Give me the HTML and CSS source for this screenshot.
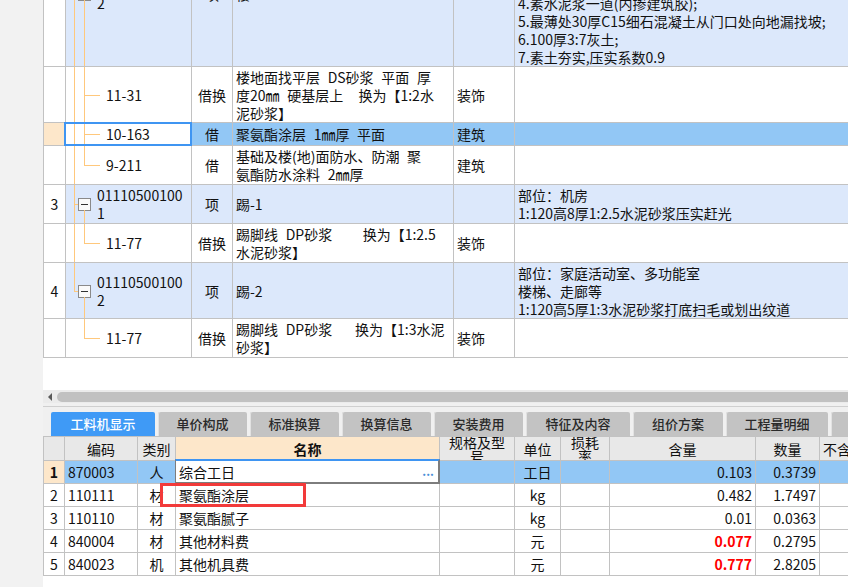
FILE: index.html
```html
<!DOCTYPE html>
<html lang="zh-CN">
<head>
<meta charset="utf-8">
<title>工料机显示</title>
<link rel="stylesheet" href="styles.css">
</head>
<body>
<div class="app">
  <aside class="side"></aside>
  <main class="main">
    <section class="tarea">
      <div class="ttable">
        <div class="trow ra parent">
          <div class="c num ctr"><span>2</span></div>
          <div class="c tree"><span class="vo"></span><span class="so"></span><span class="box"></span><span class="vi frombox"></span><span class="ptxt">01110100100<br>2</span></div>
          <div class="c ctr"><span>项</span></div>
          <div class="c"><span>楼-2</span></div>
          <div class="c"></div>
          <div class="c"><span>部位：卫生间<br>1.防水层;<br>2.找平层;<br>3.结构层;<br>4.素水泥浆一道(内掺建筑胶);<br>5.最薄处30厚C15细石混凝土从门口处向地漏找坡;<br>6.100厚3:7灰土;<br>7.素土夯实,压实系数0.9</span></div>
        </div>
        <div class="trow rb">
          <div class="c num"></div>
          <div class="c tree"><span class="vo"></span><span class="vi"></span><span class="st"></span><span class="ctxt">11-31</span></div>
          <div class="c ctr"><span>借换</span></div>
          <div class="c"><span>楼地面找平层 DS砂浆 平面 厚<br>度20㎜ 硬基层上  换为【1:2水<br>泥砂浆】</span></div>
          <div class="c"><span>装饰</span></div>
          <div class="c"></div>
        </div>
        <div class="trow rc">
          <div class="c num peach"></div>
          <div class="c tree focus"><span class="vo"></span><span class="vi"></span><span class="st"></span><span class="ctxt">10-163</span></div>
          <div class="c ctr sel"><span>借</span></div>
          <div class="c sel"><span>聚氨酯涂层 1㎜厚 平面</span></div>
          <div class="c sel"><span>建筑</span></div>
          <div class="c sel"></div>
        </div>
        <div class="trow rd">
          <div class="c num"></div>
          <div class="c tree"><span class="vo"></span><span class="vi half"></span><span class="st"></span><span class="ctxt">9-211</span></div>
          <div class="c ctr"><span>借</span></div>
          <div class="c"><span>基础及楼(地)面防水、防潮 聚<br>氨酯防水涂料 2㎜厚</span></div>
          <div class="c"><span>建筑</span></div>
          <div class="c"></div>
        </div>
        <div class="trow re parent">
          <div class="c num ctr"><span>3</span></div>
          <div class="c tree"><span class="vo"></span><span class="so"></span><span class="box"></span><span class="vi frombox"></span><span class="ptxt">01110500100<br>1</span></div>
          <div class="c ctr"><span>项</span></div>
          <div class="c"><span>踢-1</span></div>
          <div class="c"></div>
          <div class="c"><span>部位：机房<br>1:120高8厚1:2.5水泥砂浆压实赶光</span></div>
        </div>
        <div class="trow rf">
          <div class="c num"></div>
          <div class="c tree"><span class="vo"></span><span class="vi half"></span><span class="st"></span><span class="ctxt">11-77</span></div>
          <div class="c ctr"><span>借换</span></div>
          <div class="c"><span>踢脚线 DP砂浆    换为【1:2.5<br>水泥砂浆】</span></div>
          <div class="c"><span>装饰</span></div>
          <div class="c"></div>
        </div>
        <div class="trow rg parent">
          <div class="c num ctr"><span>4</span></div>
          <div class="c tree"><span class="vo half"></span><span class="so"></span><span class="box"></span><span class="vi frombox"></span><span class="ptxt">01110500100<br>2</span></div>
          <div class="c ctr"><span>项</span></div>
          <div class="c"><span>踢-2</span></div>
          <div class="c"></div>
          <div class="c"><span>部位：家庭活动室、多功能室<br>楼梯、走廊等<br>1:120高5厚1:3水泥砂浆打底扫毛或划出纹道</span></div>
        </div>
        <div class="trow rh">
          <div class="c num"></div>
          <div class="c tree"><span class="vi half"></span><span class="st"></span><span class="ctxt">11-77</span></div>
          <div class="c ctr"><span>借换</span></div>
          <div class="c"><span>踢脚线 DP砂浆   换为【1:3水泥<br>砂浆】</span></div>
          <div class="c"><span>装饰</span></div>
          <div class="c"></div>
        </div>
      </div>
    </section>

    <div class="hscroll"><span class="arrow"></span><span class="thumb"></span></div>
    <div class="split"></div>

    <nav class="tabs">
      <div class="tab on w5">工料机显示</div>
      <div class="tab w4">单价构成</div>
      <div class="tab w4">标准换算</div>
      <div class="tab w4">换算信息</div>
      <div class="tab w4">安装费用</div>
      <div class="tab w5">特征及内容</div>
      <div class="tab w4b">组价方案</div>
      <div class="tab w5b">工程量明细</div>
      <div class="tab w4"></div>
    </nav>

    <section class="barea">
      <div class="btable">
        <div class="brow hd">
          <div class="b"></div>
          <div class="b ctr">编码</div>
          <div class="b ctr">类别</div>
          <div class="b ctr peach bold">名称</div>
          <div class="b ctr two"><span>规格及型号</span></div>
          <div class="b ctr">单位</div>
          <div class="b ctr two"><span>损耗率</span></div>
          <div class="b ctr">含量</div>
          <div class="b ctr">数量</div>
          <div class="b">不含税市场价</div>
        </div>
        <div class="brow">
          <div class="b ctr peach bold rnum">1</div>
          <div class="b sel">870003</div>
          <div class="b ctr sel">人</div>
          <div class="b edit">综合工日<span class="dots">...</span></div>
          <div class="b sel"></div>
          <div class="b ctr sel">工日</div>
          <div class="b sel"></div>
          <div class="b rt sel">0.103</div>
          <div class="b rt sel">0.3739</div>
          <div class="b sel"></div>
        </div>
        <div class="brow">
          <div class="b ctr">2</div>
          <div class="b">110111</div>
          <div class="b ctr">材</div>
          <div class="b">聚氨酯涂层</div>
          <div class="b"></div>
          <div class="b ctr">kg</div>
          <div class="b"></div>
          <div class="b rt">0.482</div>
          <div class="b rt">1.7497</div>
          <div class="b"></div>
        </div>
        <div class="brow">
          <div class="b ctr">3</div>
          <div class="b">110110</div>
          <div class="b ctr">材</div>
          <div class="b">聚氨酯腻子</div>
          <div class="b"></div>
          <div class="b ctr">kg</div>
          <div class="b"></div>
          <div class="b rt">0.01</div>
          <div class="b rt">0.0363</div>
          <div class="b"></div>
        </div>
        <div class="brow">
          <div class="b ctr">4</div>
          <div class="b">840004</div>
          <div class="b ctr">材</div>
          <div class="b">其他材料费</div>
          <div class="b"></div>
          <div class="b ctr">元</div>
          <div class="b"></div>
          <div class="b rt red">0.077</div>
          <div class="b rt">0.2795</div>
          <div class="b"></div>
        </div>
        <div class="brow">
          <div class="b ctr">5</div>
          <div class="b">840023</div>
          <div class="b ctr">机</div>
          <div class="b">其他机具费</div>
          <div class="b"></div>
          <div class="b ctr">元</div>
          <div class="b"></div>
          <div class="b rt red">0.777</div>
          <div class="b rt">2.8205</div>
          <div class="b"></div>
        </div>
        <div class="mark"></div>
      </div>
    </section>
  </main>
</div>
</body>
</html>
```

FILE: styles.css
```css
* { box-sizing: border-box; margin: 0; padding: 0; }
html, body { width: 848px; height: 587px; overflow: hidden; }
body {
  font-family: "Noto Sans CJK SC", "Noto Sans", sans-serif;
  font-size: 14px;
  line-height: 18px;
  word-spacing: 4.5px;
  color: #111;
  background: #f2f2f2;
}
.app { display: flex; height: 587px; }
.side { width: 43px; flex: none; background: #f2f2f2; }
.main { flex: 1; min-width: 0; display: flex; flex-direction: column; overflow: hidden; }

/* ---------- top grid ---------- */
.tarea { height: 390px; flex: none; overflow: hidden; background: #fff; }
.ttable { margin-top: -79px; border-left: 1px solid #c2c2c2; width: max-content; }
.trow { display: grid; grid-template-columns: 22px 126px 41px 221px 61px 420px; }
.ra { height: 146px; }
.rb, .rg { height: 56px; }
.rc { height: 23px; }
.rd, .re, .rf, .rh { height: 39px; }
.c {
  border-right: 1px solid #c2c2c2;
  border-bottom: 1px solid #c2c2c2;
  display: flex;
  align-items: center;
  padding: 0 3px;
  white-space: pre;
  overflow: hidden;
}
.ctr { justify-content: center; }
.num { padding: 0; }
.parent .c:not(.num) { background: #dce8fb; }
.peach { background: #fde7ca; }
.sel { background: #92c7f5; }

.tree { position: relative; padding: 0; }
.tree .vo, .tree .vi, .tree .st, .tree .so { position: absolute; background: #ffc87c; }
.tree .vo { left: 8px; width: 1px; top: 0; bottom: -1px; }
.tree .vo.half { bottom: auto; height: 50%; }
.tree .vi { left: 18px; width: 1px; top: 0; bottom: -1px; }
.tree .vi.half { bottom: auto; height: 50%; }
.tree .vi.frombox { top: calc(50% + 6px); }
.tree .st { left: 18px; width: 16px; height: 1px; top: 50%; }
.tree .so { left: 8px; width: 5px; height: 1px; top: 50%; }
.tree .box {
  position: absolute; left: 12px; top: calc(50% - 6px);
  width: 13px; height: 13px;
  border: 1px solid #8a8a8a; background: #fafafa;
}
.tree .box::after {
  content: ""; position: absolute; left: 2px; right: 2px; top: 5px; height: 1px; background: #333;
}
.ptxt { padding-left: 31px; }
.ctxt { padding-left: 40px; }
.focus { background: #fff; overflow: visible; }
.focus::after {
  content: ""; position: absolute; left: -2px; top: -1px; right: -1px; bottom: -1px;
  border: 2px solid #3f95f2;
}

/* ---------- scrollbar / tabs ---------- */
.hscroll { height: 13px; flex: none; background: #ebebeb; display: flex; align-items: center; padding-left: 5px; gap: 5px; }
.arrow { width: 0; height: 0; border-top: 4px solid transparent; border-bottom: 4px solid transparent; border-right: 4px solid #5a5a5a; }
.thumb { flex: 1; height: 10px; border-radius: 5px 0 0 5px; background: #c1c1c1; }
.split { height: 4px; flex: none; background: #f0f0f0; border-bottom: 1px solid #cfcfcf; }
.tabs { height: 29px; flex: none; display: flex; gap: 3px; padding: 5px 0 0 8px; background: #f0f0f0; }
.tab {
  height: 24px; flex: none;
  display: flex; align-items: center; justify-content: center;
  background: #c3c3c3; color: #2a2a2a; font-size: 13px; font-weight: 500;
  border-radius: 2px 2px 0 0;
  box-shadow: inset 1px 0 0 #e2e2e2;
}
.tab.on { background: #3f9af6; color: #fff; box-shadow: none; }
.w5 { width: 104px; }
.w4 { width: 89px; }
.w4b { width: 90px; }
.w5b { width: 102px; }

/* ---------- bottom grid ---------- */
.barea { flex: 1; background: #fff; }
.btable { position: relative; border-top: 1px solid #c2c2c2; border-left: 1px solid #c2c2c2; width: max-content; }
.brow { display: grid; grid-template-columns: 21px 73px 38px 264px 75px 46px 49px 146px 64px 120px; height: 23px; }
.brow.hd { height: 24px; }
.b {
  border-right: 1px solid #c2c2c2;
  border-bottom: 1px solid #c2c2c2;
  display: flex; align-items: center;
  padding: 0 3px;
  white-space: nowrap; overflow: hidden;
}
.hd .b { background: #e8e8e8; }
.hd .b.peach { background: #fde7ca; }
.b.ctr { justify-content: center; }
.b.rt { justify-content: flex-end; }
.bold { font-weight: 700; }
.rnum { padding: 0; }
.b.two { white-space: normal; line-height: 14px; font-size: 14px; text-align: center; padding: 0 5px; }
.b.two span { display: block; width: 100%; }
.red { color: #ff0000; font-weight: 700; }
.edit { position: relative; background: #fff; overflow: visible; }
.edit::after {
  content: ""; position: absolute; left: -1px; top: -2px; right: -1px; bottom: -1px;
  border-top: 2px solid #3f95f2; border-left: 1px solid #7d7d7d;
  border-right: 2px solid #7d7d7d; border-bottom: 2px solid #7d7d7d;
}
.dots { position: absolute; right: 5px; top: 1px; color: #4a8fd8; font-size: 12px; font-weight: 700; letter-spacing: 0; }
.mark {
  position: absolute; left: 116px; top: 46px; width: 146px; height: 24px;
  border: 3px solid #f23a3a;
}
```
